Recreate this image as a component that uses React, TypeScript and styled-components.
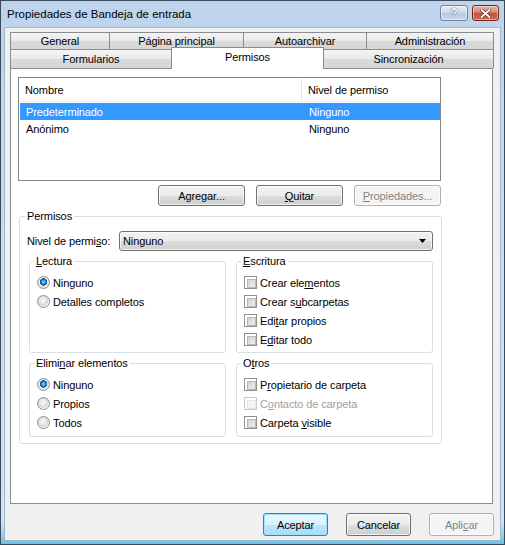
import React from "react";
import styled, { createGlobalStyle } from "styled-components";

const GlobalStyle = createGlobalStyle`
  html, body {
    margin: 0;
    padding: 0;
    background: #fff;
  }
  body {
    font-family: "Liberation Sans", Arial, sans-serif;
    font-size: 11px;
    letter-spacing: -0.1px;
    color: #000;
  }
  * {
    box-sizing: border-box;
  }
`

const Window = styled.div`
  width: 505px;
  height: 545px;
  border: 1px solid #3b4a5c;
  background: linear-gradient(#bed4ec, #cadcf0 40%, #d3e3f4 96%, #5cc6ef);
  display: flex;
  flex-direction: column;
`

const TitleBar = styled.div`
  height: 26px;
  display: flex;
  justify-content: space-between;
  align-items: flex-start;
  padding: 0 5px 0 6px;
`

const TitleText = styled.div`
  line-height: 26px;
  font-size: 11.5px;
  letter-spacing: 0;
  color: #000;
`

const TitleButtons = styled.div`
  display: flex;
  gap: 4px;
  padding-top: 4px;
`

const CaptionButton = styled.div<{ $close?: boolean }>`
  width: ${p => (p.$close ? "27px" : "28px")};
  height: 16px;
  border-radius: 3px;
  border: 1px solid ${p => (p.$close ? "#6e2a1f" : "#72859d")};
  background: ${p =>
    p.$close
      ? "linear-gradient(#e6b2a4, #d98a76 45%, #c65239 50%, #cf6a4e)"
      : "linear-gradient(#e6eef8, #cddcee 45%, #b7cae2 50%, #c6d7ec)"};
  box-shadow: inset 0 0 0 1px rgba(255, 255, 255, 0.45);
  display: flex;
  align-items: center;
  justify-content: center;
  color: #fff;
  font-weight: bold;
  font-size: 12px;
  line-height: 1;
  text-shadow: 0 0 1px #44576f, 0 0 1px #44576f;
`

const Client = styled.div`
  flex: 1;
  margin: 0 3px 3px;
  background: #f0f0f0;
  border: 1px solid #a3b5c9;
  padding: 4px 7px 0 5px;
  display: flex;
  flex-direction: column;
`

const TabRow = styled.div<{ $h: number }>`
  display: flex;
  height: ${p => p.$h}px;
`

const Tab = styled.div<{ $w: number; $selected?: boolean }>`
  width: ${p => p.$w + 1}px;
  margin-right: -1px;
  border: 1px solid #898c95;
  border-bottom: none;
  background: ${p => (p.$selected ? "#fff" : "linear-gradient(#f4f4f4, #e9e9e9 50%, #dadada 52%, #d6d6d6)")};
  display: flex;
  justify-content: center;
  align-items: ${p => (p.$selected ? "flex-start" : "center")};
  padding-top: ${p => (p.$selected ? "3px" : "0")};
  margin-top: ${p => (p.$selected ? "-2px" : "0")};
  height: ${p => (p.$selected ? "calc(100% + 3px)" : "100%")};
  position: relative;
  z-index: ${p => (p.$selected ? 2 : 0)};
`

const Panel = styled.div`
  height: 436px;
  border: 1px solid #898c95;
  background: #fff;
  padding: 8px 0 0 7px;
  display: flex;
  flex-direction: column;
`

const ListView = styled.div`
  width: 423px;
  height: 104px;
  border: 1px solid #828790;
  background: #fff;
`

const ListLine = styled.div<{ $selected?: boolean; $header?: boolean }>`
  display: grid;
  grid-template-columns: 283px 1fr;
  height: ${p => (p.$header ? "24px" : "17px")};
  align-items: center;
  background: ${p => (p.$selected ? "#3399ff" : "transparent")};
  color: ${p => (p.$selected ? "#fff" : "#000")};
  margin: ${p => (p.$header ? "0 0 1px" : "0 0 0 1px")};
  border-bottom: ${p => (p.$header ? "1px solid #f0f0f0" : "none")};
`

const ListCell = styled.div<{ $sep?: boolean }>`
  padding-left: 6px;
  height: 100%;
  display: flex;
  align-items: center;
  border-right: ${p => (p.$sep ? "1px solid #e3e6ea" : "none")};
`

const ButtonRow = styled.div<{ $gap: number }>`
  display: flex;
  justify-content: flex-end;
  gap: ${p => p.$gap}px;
`

const ListButtons = styled(ButtonRow)`
  width: 423px;
  margin-top: 4px;
`

const Button = styled.div<{ $w: number; $h: number; $disabled?: boolean; $default?: boolean }>`
  width: ${p => p.$w}px;
  height: ${p => p.$h}px;
  border: 1px solid ${p => (p.$disabled ? "#adb2b5" : p.$default ? "#3c7fb1" : "#707070")};
  border-radius: 3px;
  background: ${p =>
    p.$disabled
      ? "#f4f4f4"
      : p.$default
      ? "linear-gradient(#ebf7fd, #dbf1fc 50%, #bfe6fb 51%, #a9dbf6)"
      : "linear-gradient(#f2f2f2, #ebebeb 50%, #dddddd 51%, #cfcfcf)"};
  box-shadow: inset 0 0 0 1px ${p => (p.$default ? "#9fe0fb" : "rgba(255,255,255,0.7)")};
  color: ${p => (p.$disabled ? "#838383" : "#000")};
  display: flex;
  align-items: center;
  justify-content: center;
`

const Group = styled.fieldset<{ $w: number; $h: number }>`
  width: ${p => p.$w}px;
  height: ${p => p.$h}px;
  margin: 0;
  border: 1px solid #d5dfe5;
  border-radius: 3px;
  padding: 0 7px 5px 7px;
  min-width: 0;
  display: flex;
  flex-direction: column;
`

const Legend = styled.legend<{ $shift?: number }>`
  padding: 0 2px;
  margin-left: ${p => p.$shift ?? -2}px;
  line-height: 13px;
`

const PermGroup = styled(Group)`
  margin-top: 4px;
  margin-left: 1px;
`

const LevelRow = styled.div`
  display: flex;
  align-items: center;
  margin-top: 8px;
`

const LevelLabel = styled.div`
  width: 92px;
`

const Combo = styled.div`
  width: 314px;
  height: 20px;
  border: 1px solid #707070;
  border-radius: 3px;
  background: linear-gradient(#f2f2f2, #ebebeb 50%, #dddddd 51%, #cfcfcf);
  box-shadow: inset 0 0 0 1px rgba(255, 255, 255, 0.7);
  display: flex;
  align-items: center;
  justify-content: space-between;
  padding: 0 6px 0 3px;
`

const SubGrid = styled.div`
  display: grid;
  grid-template-columns: 197px 197px;
  column-gap: 10px;
  row-gap: 4px;
  margin: 4px 0 0 2px;
`

const Options = styled.div`
  display: flex;
  flex-direction: column;
  margin-top: 5px;
`

const Option = styled.div<{ $disabled?: boolean }>`
  height: 19px;
  display: flex;
  align-items: center;
  gap: 3px;
  color: ${p => (p.$disabled ? "#a0a0a0" : "#000")};
`

const Radio = styled.span<{ $checked?: boolean }>`
  width: 13px;
  height: 13px;
  border-radius: 50%;
  border: 1px solid #8e8f8f;
  background: ${p =>
    p.$checked
      ? "radial-gradient(circle at 50% 45%, #9fe0fb 0, #2a8ad4 2px, #0c4f8f 3.5px, #f4f4f4 4px, #dcdcdc 5.5px, #fdfdfd 6px)"
      : "radial-gradient(circle at 45% 40%, #fafafa 0, #e4e4e4 3.5px, #d4d4d4 5px, #f8f8f8 6px)"};
  flex: none;
`

const Check = styled.span<{ $disabled?: boolean }>`
  width: 13px;
  height: 13px;
  border: 1px solid ${p => (p.$disabled ? "#c9c9c9" : "#8e8f8f")};
  background: #fff;
  padding: 2px;
  flex: none;
  &::after {
    content: "";
    display: block;
    width: 100%;
    height: 100%;
    border: 1px solid ${p => (p.$disabled ? "#e6e6e6" : "#b4b9be")};
    background: ${p => (p.$disabled ? "#f4f4f4" : "linear-gradient(135deg, #cfd2d6, #eeeeee)")};
  }
`

const Footer = styled(ButtonRow)`
  padding: 9px 0 0;
  margin-right: -1px;
`

const Key = styled.span`
  text-decoration: underline;
  text-underline-offset: 1px;
`

const ComboArrow = () => (
  <svg width="7" height="4" viewBox="0 0 7 4">
    <polygon points="0,0 7,0 3.5,4" fill="#000" />
  </svg>
)

const App = () => {
  return (
    <>
      <GlobalStyle />
      <Window>
        <TitleBar>
          <TitleText>Propiedades de Bandeja de entrada</TitleText>
          <TitleButtons>
            <CaptionButton>?</CaptionButton>
            <CaptionButton $close>
              <svg width="11" height="9" viewBox="0 0 11 9">
                <path d="M1.5 1 L9.5 8 M9.5 1 L1.5 8" stroke="#5a2016" strokeWidth="3.2" strokeLinecap="round" />
                <path d="M1.5 1 L9.5 8 M9.5 1 L1.5 8" stroke="#fff" strokeWidth="2" strokeLinecap="round" />
              </svg>
            </CaptionButton>
          </TitleButtons>
        </TitleBar>
        <Client>
          <TabRow $h={17}>
            <Tab $w={99}>General</Tab>
            <Tab $w={134}>Página principal</Tab>
            <Tab $w={123}>Autoarchivar</Tab>
            <Tab $w={127}>Administración</Tab>
          </TabRow>
          <TabRow $h={19}>
            <Tab $w={161}>Formularios</Tab>
            <Tab $w={152} $selected>Permisos</Tab>
            <Tab $w={170}>Sincronización</Tab>
          </TabRow>
          <Panel>
            <ListView>
              <ListLine $header>
                <ListCell $sep>Nombre</ListCell>
                <ListCell>Nivel de permiso</ListCell>
              </ListLine>
              <ListLine $selected>
                <ListCell>Predeterminado</ListCell>
                <ListCell>Ninguno</ListCell>
              </ListLine>
              <ListLine>
                <ListCell>Anónimo</ListCell>
                <ListCell>Ninguno</ListCell>
              </ListLine>
            </ListView>
            <ListButtons $gap={11}>
              <Button $w={87} $h={21}>A<Key>g</Key>regar...</Button>
              <Button $w={87} $h={21}><Key>Q</Key>uitar</Button>
              <Button $w={87} $h={21} $disabled><Key>P</Key>ropiedades...</Button>
            </ListButtons>
            <PermGroup $w={423} $h={234}>
              <Legend>Permisos</Legend>
              <LevelRow>
                <LevelLabel>Nivel de permi<Key>s</Key>o:</LevelLabel>
                <Combo>
                  <span>Ninguno</span>
                  <ComboArrow />
                </Combo>
              </LevelRow>
              <SubGrid>
                <Group $w={197} $h={98}>
                  <Legend $shift={-3}><Key>L</Key>ectura</Legend>
                  <Options>
                    <Option><Radio $checked /><span>Ninguno</span></Option>
                    <Option><Radio /><span>Detalles completos</span></Option>
                  </Options>
                </Group>
                <Group $w={197} $h={98}>
                  <Legend $shift={-3}><Key>E</Key>scritura</Legend>
                  <Options>
                    <Option><Check /><span>Crear ele<Key>m</Key>entos</span></Option>
                    <Option><Check /><span>Crear s<Key>u</Key>bcarpetas</span></Option>
                    <Option><Check /><span>Edi<Key>t</Key>ar propios</span></Option>
                    <Option><Check /><span>E<Key>d</Key>itar todo</span></Option>
                  </Options>
                </Group>
                <Group $w={197} $h={80}>
                  <Legend $shift={-3}>Elimi<Key>n</Key>ar elementos</Legend>
                  <Options>
                    <Option><Radio $checked /><span>Ninguno</span></Option>
                    <Option><Radio /><span>Propios</span></Option>
                    <Option><Radio /><span>Todos</span></Option>
                  </Options>
                </Group>
                <Group $w={197} $h={80}>
                  <Legend $shift={-3}>O<Key>t</Key>ros</Legend>
                  <Options>
                    <Option><Check /><span>P<Key>r</Key>opietario de carpeta</span></Option>
                    <Option $disabled><Check $disabled /><span>C<Key>o</Key>ntacto de carpeta</span></Option>
                    <Option><Check /><span>Carpeta <Key>v</Key>isible</span></Option>
                  </Options>
                </Group>
              </SubGrid>
            </PermGroup>
          </Panel>
          <Footer $gap={18}>
            <Button $w={65} $h={23} $default>Aceptar</Button>
            <Button $w={65} $h={23}>Cancelar</Button>
            <Button $w={65} $h={23} $disabled>Apli<Key>c</Key>ar</Button>
          </Footer>
        </Client>
      </Window>
    </>
  )
}

export default App
